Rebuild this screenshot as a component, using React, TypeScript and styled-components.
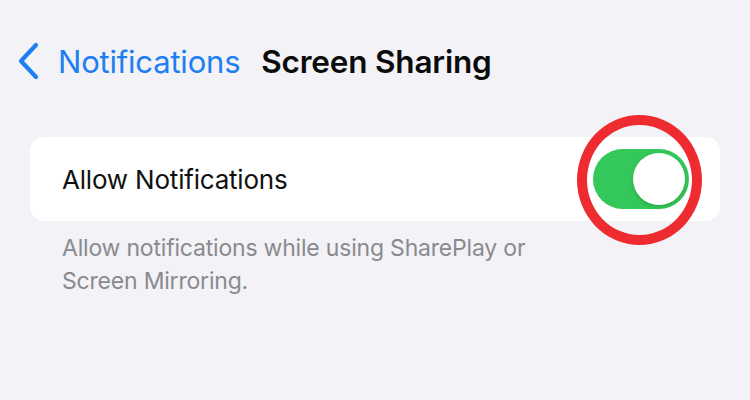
import React from "react";
import styled, { createGlobalStyle } from "styled-components";

const Global = createGlobalStyle`
  html, body { margin: 0; padding: 0; background: #f2f2f7; }
  body { font-family: Inter, "Noto Sans", sans-serif; -webkit-font-smoothing: antialiased; }
`;

const Page = styled.div`
  width: 750px;
  height: 400px;
  background: #f2f2f7;
  box-sizing: border-box;
  padding: 40px 30px 0 30px;
  display: flex;
  flex-direction: column;
`;

const NavBar = styled.div`
  display: flex;
  align-items: center;
  height: 42px;
  margin-left: -14px;
`;

const Back = styled.div`
  display: flex;
  align-items: center;
  color: #1d7ff2;
  font-size: 31px;
  font-weight: 400;
  letter-spacing: -0.2px;
`;

const Chevron = styled.svg`
  width: 24px;
  height: 38px;
  margin-right: 18px;
`;

const Title = styled.div`
  margin-left: 21px;
  font-size: 31.5px;
  font-weight: 600;
  color: #0b0b0c;
  letter-spacing: -0.2px;
`;

const Card = styled.div`
  margin-top: 55px;
  height: 84px;
  background: #ffffff;
  border-radius: 14px;
  display: flex;
  align-items: center;
  justify-content: space-between;
  padding: 0 31px 0 32px;
  position: relative;
`;

const Label = styled.div`
  font-size: 26px;
  color: #111;
  letter-spacing: -0.2px;
`;

const Toggle = styled.div<{ on: boolean }>`
  position: relative;
  width: 96px;
  height: 60px;
  border-radius: 30px;
  background: ${(p) => (p.on ? "#34c759" : "#e9e9ea")};
`;

const Knob = styled.div<{ on: boolean }>`
  position: absolute;
  top: 4px;
  left: ${(p) => (p.on ? "40px" : "4px")};
  width: 52px;
  height: 52px;
  border-radius: 50%;
  background: #fff;
  box-shadow: 0 2px 4px rgba(0, 0, 0, 0.15);
`;

const Ring = styled.div`
  position: absolute;
  left: 547px;
  top: -22px;
  width: 125px;
  height: 130px;
  box-sizing: border-box;
  border: 10px solid #ee2b2f;
  border-radius: 50%;
  pointer-events: none;
`;

const Footer = styled.div`
  margin-top: 11px;
  padding-left: 32px;
  font-size: 23px;
  line-height: 33px;
  color: #8a8a8e;
  letter-spacing: -0.2px;
  width: 500px;
`;

export default function App() {
  const on = true;
  return (
    <>
      <Global />
      <Page>
        <NavBar>
          <Back>
            <Chevron viewBox="0 0 24 38">
              <path d="M20 3 L5 19 L20 35" fill="none" stroke="#1d7ff2" strokeWidth="4.2" strokeLinecap="round" strokeLinejoin="round" />
            </Chevron>
            Notifications
          </Back>
          <Title>Screen Sharing</Title>
        </NavBar>
        <Card>
          <Label>Allow Notifications</Label>
          <Toggle on={on}>
            <Knob on={on} />
          </Toggle>
          <Ring />
        </Card>
        <Footer>Allow notifications while using SharePlay or Screen Mirroring.</Footer>
      </Page>
    </>
  );
}
